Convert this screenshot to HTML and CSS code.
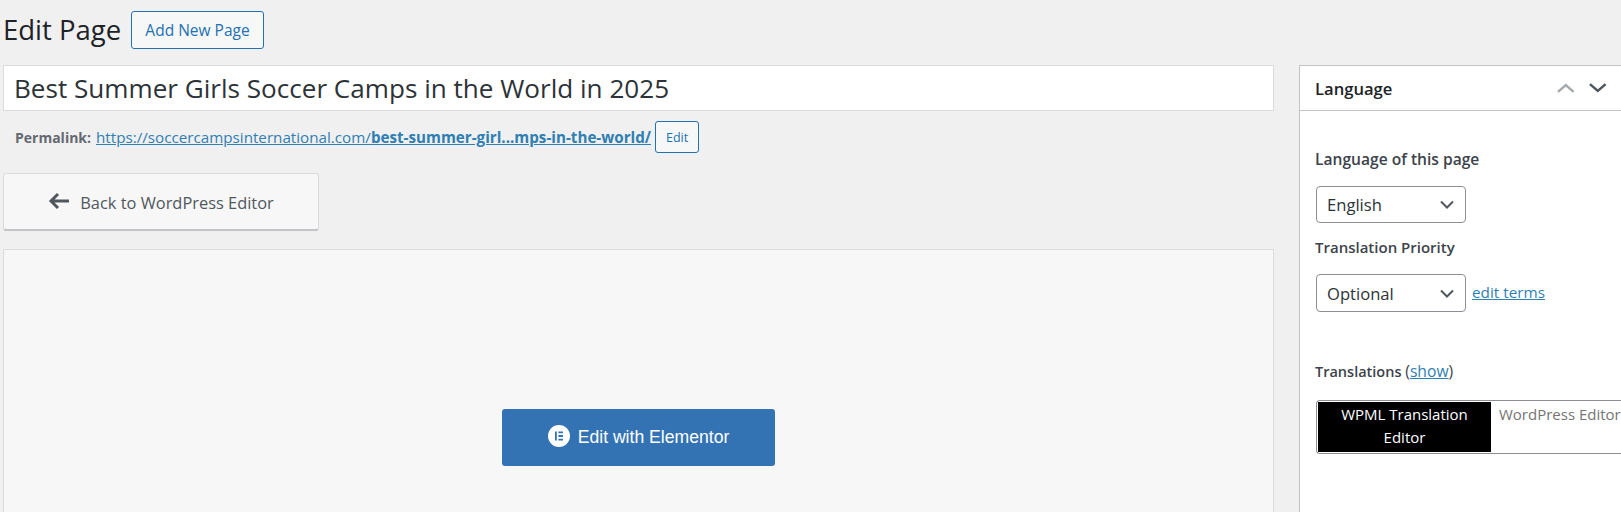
FILE: index.html
```html
<!DOCTYPE html>
<html>
<head>
   <meta charset="utf-8">
   <title>Edit Page</title>
   <link rel="stylesheet" href="styles.css">
</head>
<body>
   <div id="wrap">
      <div id="post-body">
         <div class="page-head">
            <h1>Edit Page</h1>
            <a class="outline-btn add-new" href="#">Add New Page</a>
         </div>
         <input type="text" id="title" value="Best Summer Girls Soccer Camps in the World in 2025">
         <div class="permalink">
            <strong>Permalink:</strong>
            <a href="#">https://soccercampsinternational.com/<b>best-summer-girl...mps-in-the-world/</b></a>
            <button class="outline-btn edit-slug">Edit</button>
         </div>
         <a class="back-btn" href="#">
            <svg width="22" height="18" viewBox="0 0 22 18"><path d="M21 9H3M10 2L3 9l7 7" fill="none" stroke="#50575e" stroke-width="3"/></svg>
            <span>Back to WordPress Editor</span>
         </a>
         <div class="elementor-panel">
            <a class="elementor-btn" href="#">
               <svg width="22" height="22" viewBox="0 0 22 22"><circle cx="11" cy="11" r="11" fill="#fff"/><path d="M7 6.5h1.8v9H7zM10.4 6.5H15v1.8h-4.600zM10.400 10.100H15v1.800h-4.600zM10.400 13.700H15v1.800h-4.600z" fill="#3373b4"/></svg>
               <span>Edit with Elementor</span>
            </a>
         </div>
      </div>
      <div id="side">
         <div class="box-head">
            <h2>Language</h2>
            <svg class="chev" width="20" height="12" viewBox="0 0 20 12"><path d="M2 10l8-7 8 7" fill="none" stroke="#a7aaad" stroke-width="2.600"/></svg>
            <svg class="chev" width="20" height="12" viewBox="0 0 20 12"><path d="M2 2l8 7 8-7" fill="none" stroke="#50575e" stroke-width="2.600"/></svg>
         </div>
         <div class="box-body">
            <p class="label first">Language of this page</p>
            <select class="wp-select"><option>English</option></select>
            <p class="label priority">Translation Priority</p>
            <div class="select-row">
               <select class="wp-select"><option>Optional</option></select>
               <a href="#">edit terms</a>
            </div>
            <p class="label translations">Translations <span>(<a href="#">show</a>)</span></p>
            <div class="editor-tabs">
               <div class="tab active">WPML Translation Editor</div>
               <div class="tab">WordPress Editor</div>
            </div>
         </div>
      </div>
   </div>
</body>
</html>
```

FILE: styles.css
```css
html, body {
   margin: 0;
   height: 512px;
   overflow: hidden;
}
body {
   background-color: #f0f0f1;
   color: #3c434a;
   font-family: "Open Sans", "Noto Sans", sans-serif;
   font-size: 14px;
}
a {
   color: #2f7fb3;
}
#wrap {
   display: flex;
   align-items: flex-start;
   padding-left: 3px;
   height: 512px;
}
#post-body {
   width: 1271px;
   flex: none;
}
.page-head {
   display: flex;
   align-items: center;
   padding-top: 11px;
   height: 38px;
}
h1 {
   margin: 0 11px 2px 0;
   font-size: 27.5px;
   font-weight: 400;
   color: #1d2327;
   width: 117px;
   white-space: nowrap;
}
.outline-btn {
   display: flex;
   align-items: center;
   justify-content: center;
   box-sizing: border-box;
   background-color: #f6f7f7;
   border: 1px solid #2271b1;
   border-radius: 3px;
   color: #2271b1;
   font-family: inherit;
   text-decoration: none;
}
.add-new {
   width: 133px;
   height: 38px;
   font-size: 15.5px;
}
#title {
   display: block;
   box-sizing: border-box;
   width: 100%;
   height: 46px;
   margin-top: 16px;
   padding: 0 10px;
   border: 1px solid #dcdcde;
   background-color: #fff;
   color: #2c3338;
   font-family: inherit;
   font-size: 26.1px;
}
.permalink {
   display: flex;
   align-items: center;
   height: 32px;
   margin-top: 10px;
   padding-left: 12px;
   font-size: 14px;
   color: #646970;
   white-space: nowrap;
}
.permalink strong {
   margin-right: 5px;
}
.permalink a {
   font-size: 15.2px;
}
.edit-slug {
   width: 44px;
   height: 32px;
   margin-left: 4px;
   font-size: 12.5px;
}
.back-btn {
   display: flex;
   align-items: center;
   justify-content: center;
   gap: 10px;
   box-sizing: border-box;
   width: 316px;
   height: 58px;
   margin-top: 20px;
   padding-top: 2px;
   background-color: #f7f7f7;
   border: 1px solid #dcdcde;
   border-bottom: 2px solid #c3c4c7;
   border-radius: 3px;
   color: #50575e;
   font-size: 16.4px;
   text-decoration: none;
}
.back-btn svg {
   margin-bottom: 3px;
}
.elementor-panel {
   display: flex;
   justify-content: center;
   box-sizing: border-box;
   height: 264px;
   margin-top: 18px;
   padding-top: 159px;
   background-color: #f7f7f7;
   border: 1px solid #dcdcde;
   border-bottom: none;
}
.elementor-btn {
   display: flex;
   align-items: center;
   justify-content: center;
   gap: 8px;
   width: 273px;
   height: 57px;
   background-color: #3373b4;
   border-radius: 3px;
   color: #fff;
   font-family: "Liberation Sans", Arial, sans-serif;
   font-size: 17.6px;
   text-decoration: none;
}
.elementor-btn svg {
   margin-bottom: 3px;
}
#side {
   flex: none;
   box-sizing: border-box;
   width: 322px;
   height: 447px;
   margin: 65px 0 0 25px;
   background-color: #fff;
   border: 1px solid #c3c4c7;
   border-right: none;
   border-bottom: none;
}
.box-head {
   display: flex;
   align-items: center;
   height: 44px;
   padding-left: 15px;
   border-bottom: 1px solid #c3c4c7;
}
.box-head h2 {
   margin: 0 16px 0 0;
   width: 230px;
   font-size: 16.6px;
   font-weight: 600;
   color: #1d2327;
}
.chev {
   margin-right: 13px;
}
.box-body {
   padding-left: 16px;
}
.label {
   margin: 0 0 0 -1px;
   font-weight: 600;
   color: #3c434a;
   line-height: 20px;
}
.label.first {
   padding-top: 38px;
   font-size: 15.6px;
}
.label.priority {
   margin-top: 14px;
   font-size: 15px;
}
.label.translations {
   margin-top: 49px;
   font-size: 14.5px;
}
.label span {
   font-weight: 400;
   font-size: 15.7px;
}
.wp-select {
   display: block;
   box-sizing: border-box;
   width: 150px;
   height: 37px;
   margin-top: 17px;
   padding: 0 24px 0 10px;
   appearance: none;
   background: #fff url("data:image/svg+xml,%3Csvg xmlns='http://www.w3.org/2000/svg' width='14' height='9' viewBox='0 0 14 9'%3E%3Cpath d='M1 1.500l6 6 6-6' fill='none' stroke='%2350575e' stroke-width='2'/%3E%3C/svg%3E") no-repeat right 11px center;
   border: 1px solid #8c8f94;
   border-radius: 4px;
   color: #2c3338;
   font-family: inherit;
   font-size: 16.6px;
}
.select-row {
   display: flex;
   align-items: center;
   gap: 6px;
   margin-top: 17px;
}
.select-row .wp-select {
   margin-top: 0;
   height: 38px;
}
.select-row a {
   margin-bottom: 3px;
   font-size: 15.3px;
}
.editor-tabs {
   display: flex;
   box-sizing: border-box;
   width: 305px;
   height: 54px;
   margin-top: 18px;
   border: 1px solid #8c8f94;
   border-right: none;
   border-radius: 4px 0 0 4px;
   padding: 1px 0 1px 1px;
   line-height: 23px;
   font-size: 15px;
}
.tab {
   box-sizing: border-box;
   padding: 1px 0 0 8px;
   color: #757575;
   white-space: nowrap;
}
.tab.active {
   flex: none;
   width: 173px;
   padding: 1px 8px 0;
   text-align: center;
   background-color: #000;
   color: #fff;
   white-space: normal;
}
```
